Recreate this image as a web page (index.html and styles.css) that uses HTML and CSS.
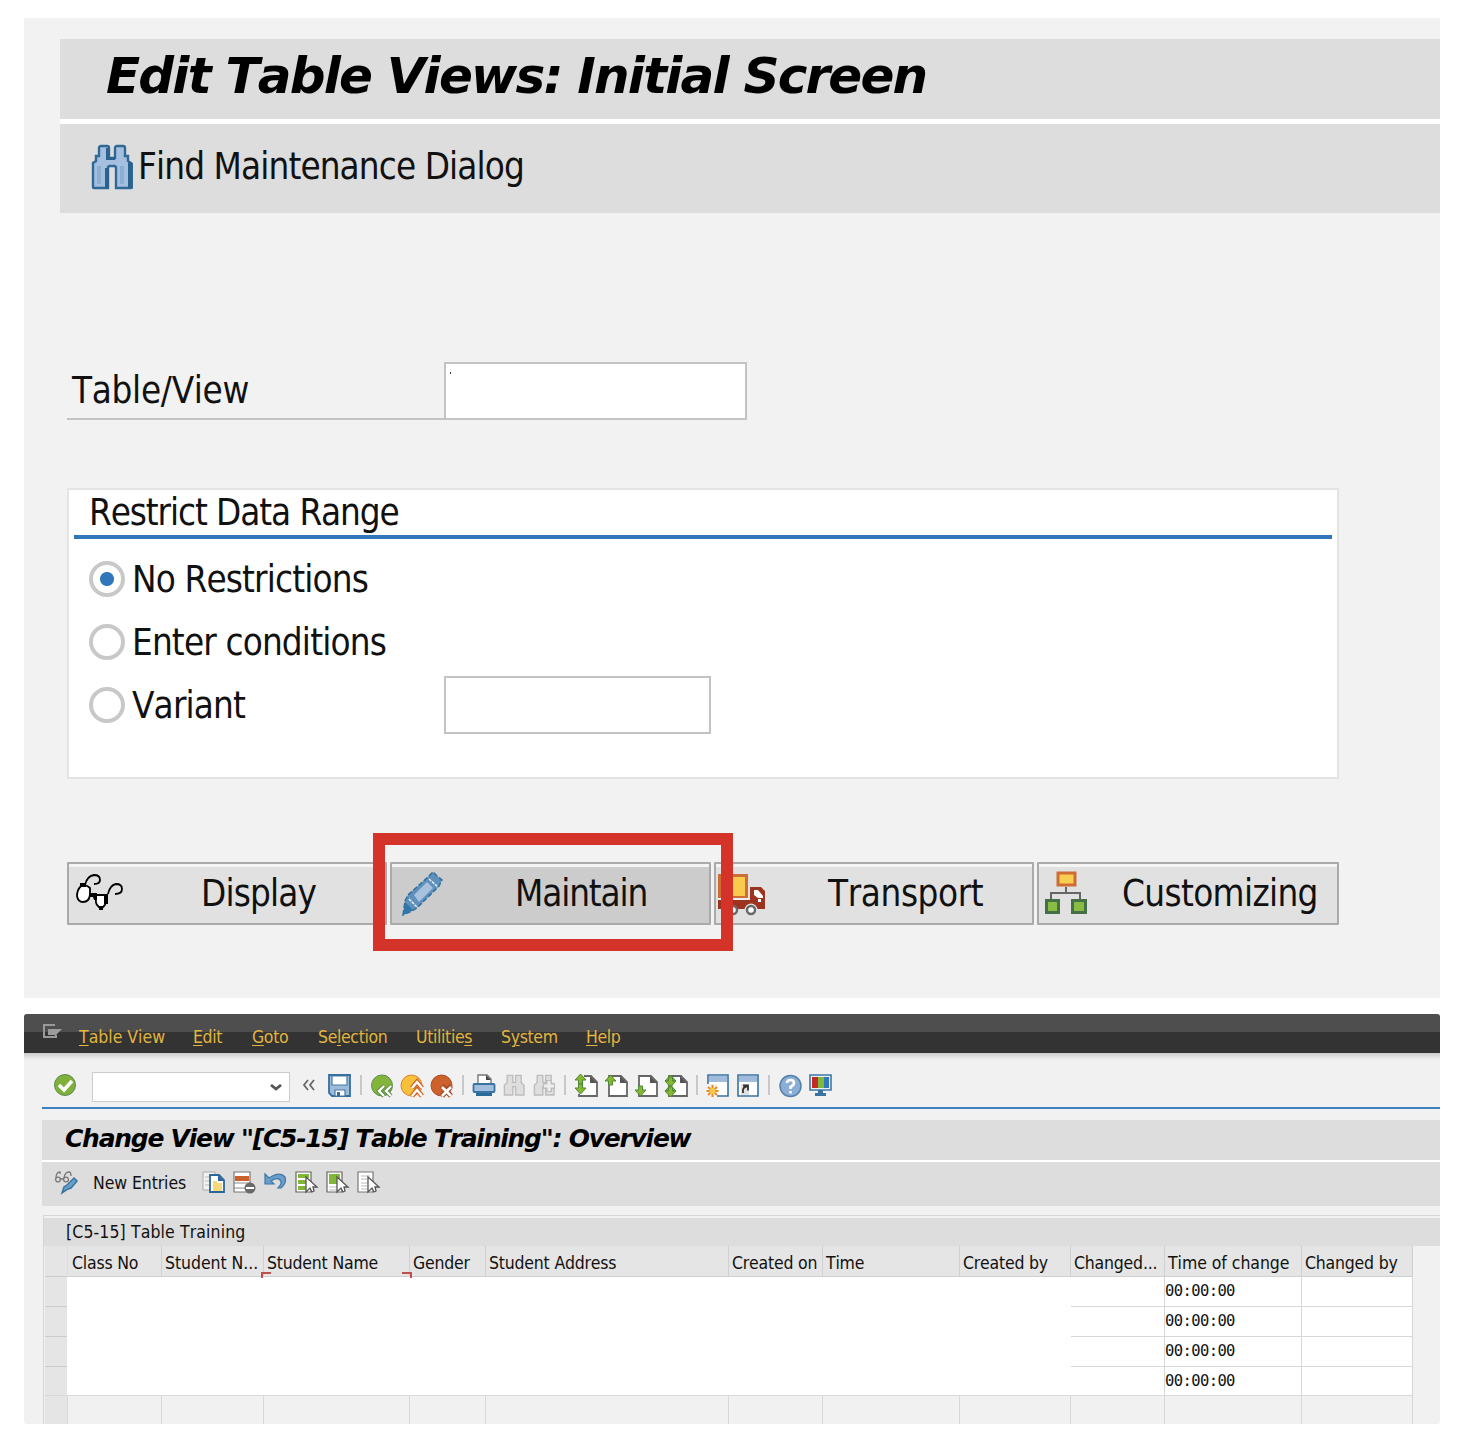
FILE: index.html
```html
<!DOCTYPE html>
<html lang="en">
<head>
<meta charset="utf-8">
<title>Table Maintenance</title>
<link rel="stylesheet" href="styles.css">
</head>
<body>
<svg class="defs" width="0" height="0">
  <defs>
    <g id="page"><path d="M7 2h10l6 6v14H5V2z" fill="#fff" stroke="#666" stroke-width="1.8"/><path d="M16 2v7h7z" fill="#555"/></g>
    <path id="up" d="M0 6 5.5 0 11 6H7.500V10H3.500V6z" fill="#86b82f" stroke="#4f8738" stroke-width="1"/>
    <path id="down" d="M0 4 5.5 10 11 4H7.500V0H3.500v4z" fill="#86b82f" stroke="#4f8738" stroke-width="1"/>
    <path id="cursor" d="M13 7v15l4-4 2 4 2-1-1-4h4z" fill="#fff" stroke="#555" stroke-width="1.3"/>
    <g id="binoc"><path d="M3 6V1h4v5h2V1h4v5l2 2v7H9V9H7v6H1V8z"/></g>
  </defs>
</svg>

<section class="initial">
  <h1 class="initial-title"><span>Edit Table Views: Initial Screen</span></h1>
  <div class="initial-tools">
    <svg width="42" height="46" viewBox="0 0 42 46"><path d="M8 12V4q0-2 2-2h6q2 0 2 2v10h6V4q0-2 2-2h6q2 0 2 2v8h3v5l4 3v23q0 1-1 1H25V24q0-2-2-2h-4q-2 0-2 2v20H3q-1 0-1-1V19l3-2v-5z" fill="#a4bfdf" stroke="#2f6a96" stroke-width="2.400"/><path d="M15 4h3v12h-3zM14 24h4v20h-4zM37 18h4v26h-4zM18 13h6v3h-6z" fill="#2a618e"/><path d="M8 22v18M31 22v18" stroke="#8fafd2" stroke-width="4"/></svg>
    <span class="big find">Find Maintenance Dialog</span>
  </div>
  <div class="field-row">
    <label class="big field-label"><span>Table/View</span></label>
    <div class="field"><i></i></div>
  </div>
  <div class="group">
    <h2 class="big"><span>Restrict Data Range</span></h2>
    <div class="option"><b class="radio on"></b><span class="big norest">No Restrictions</span></div>
    <div class="option"><b class="radio"></b><span class="big cond">Enter conditions</span></div>
    <div class="option"><b class="radio"></b><span class="big variant">Variant</span><div class="variant-field"></div></div>
  </div>
  <div class="buttons">
    <button class="btn">
      <svg class="glasses" width="48" height="42" viewBox="0 0 48 42" fill="none" stroke="#000" stroke-width="1.800"><path d="M5 13q-4 4-4 10 1 6 6 6 6 0 7-7V15q-4-4-9-2z" fill="#fff"/><path d="M20 22q-1 9 2 11l3 3 3-3q3-3 2-11z" fill="#fff"/><path d="M9 12q2-9 9-10 6 0 6 5 0 4-6 4M32 21q2-9 8-10 6 0 6 5 0 5-7 5"/><path d="M13 20h8v7h-3l-1-3h-4zM4 10h6v4H4zM28 21h4v10h-4zM23 33h4v4h-4z" fill="#000" stroke="none"/></svg>
      <span class="big display">Display</span>
    </button>
    <button class="btn active">
      <svg width="44" height="46" viewBox="0 0 44 46"><path d="M3 44 5 30 8 24 28 6l5-5 4 4 5 4-3 6-22 22-5 3z" fill="#5f90bc" stroke="#2f6f9e" stroke-width="1.500" stroke-dasharray="5 2"/><path d="M14 24 27 11l6 6-14 14z" fill="#a8c1df"/><path d="m9 28 9 9M29 8l9 8" stroke="#e8eff6" stroke-width="1.500" stroke-dasharray="3 1"/><path d="m3 44 2-13 8 8z" fill="#2f77a9"/></svg>
      <span class="big maintain">Maintain</span>
    </button>
    <button class="btn">
      <svg width="48" height="44" viewBox="0 0 48 44"><path d="M1 2h30v25H1z" fill="#cf6d36"/><path d="M4 5h24v19H4z" fill="#f9ca4c"/><path d="M1 28h32V15h11l4 4v18H1z" fill="#9c3321"/><path d="M37 18h4l5 6v2h-5l-4-3z" fill="#fff"/><path d="M41 27h3v3h-3z" fill="#fff"/><path d="M1 26h31v2H1z" fill="#eee"/><circle cx="16" cy="38" r="4" fill="#fff" stroke="#696969" stroke-width="2.500"/><circle cx="34" cy="38" r="6.500" fill="#e1e1e1"/><circle cx="34" cy="38" r="4" fill="#fff" stroke="#696969" stroke-width="2.500"/></svg>
      <span class="big transport">Transport</span>
    </button>
    <button class="btn">
      <svg width="44" height="46" viewBox="0 0 44 46"><path d="M22 16v5M7 29v-7h29v7" fill="none" stroke="#666" stroke-width="2"/><path d="M14 2h17v12H14z" fill="#f8ce50" stroke="#cf6c36" stroke-width="3"/><path d="M2.500 29.500h12v12h-12zM28.500 29.500h13v12h-13z" fill="#8abb43" stroke="#447047" stroke-width="3"/></svg>
      <span class="big custom">Customizing</span>
    </button>
    <div class="highlight"></div>
  </div>
</section>

<section class="overview">
  <nav class="menu">
    <svg width="21" height="18" viewBox="0 0 21 18"><path d="M13 2H2v12h12v-2" fill="none" stroke="#999" stroke-width="2"/><path d="M6 6h14l-6 6H6z" fill="#9b9b9b"/></svg>
    <span class="m1"><u>T</u>able View</span><span class="m2"><u>E</u>dit</span><span class="m3"><u>G</u>oto</span><span class="m4">Se<u>l</u>ection</span><span class="m5">Utilitie<u>s</u></span><span class="m6">S<u>y</u>stem</span><span class="m7"><u>H</u>elp</span>
  </nav>
  <div class="system">
    <svg class="ok" viewBox="0 0 24 24"><circle cx="11" cy="12" r="10.500" fill="#7fb13a" stroke="#5b8a4e"/><path d="m5 12 5 5 8-9" fill="none" stroke="#fff" stroke-width="3.500"/></svg>
    <div class="command"><svg width="12" height="7" viewBox="0 0 12 7"><path d="m1 1 5 4 5-4" fill="none" stroke="#555" stroke-width="2.800"/></svg></div>
    <svg class="collapse" viewBox="0 0 14 12"><path d="M6 1 2 6l4 5M12 1 8 6l4 5" fill="none" stroke="#666" stroke-width="1.800"/></svg>
    <svg viewBox="0 0 24 24"><path d="M2 1h21v21H5l-3-3z" fill="#9dbadb" stroke="#366f9d" stroke-width="1.800"/><path d="M5 2h15v9H5zM8 16h10v6H8z" fill="#fff" stroke="#4679a5" stroke-width="1.200"/><path d="M10 18h3v4h-3z" fill="#366f9d"/></svg>
    <i class="sep first"></i>
    <svg viewBox="0 0 24 24"><circle cx="12" cy="11.500" r="10.500" fill="#83b53c" stroke="#5a8c49"/><path d="m14 12-5 5 5 5m7-10-5 5 5 5" fill="none" stroke="#52823e" stroke-width="4"/><path d="m14 12-5 5 5 5m7-10-5 5 5 5" fill="none" stroke="#fff" stroke-width="2.400"/></svg>
    <svg viewBox="0 0 24 24"><circle cx="11.500" cy="11.500" r="10.500" fill="#f7c13b" stroke="#da842d"/><path d="m12 14 5-6 5 6m-10 8 5-6 5 6" fill="none" stroke="#d4682d" stroke-width="5"/><path d="m12 14 5-6 5 6m-10 8 5-6 5 6" fill="none" stroke="#fff" stroke-width="2.400"/></svg>
    <svg viewBox="0 0 24 24"><circle cx="11.500" cy="11.500" r="10.500" fill="#cc612c" stroke="#ae4a26"/><path d="m12 12 9 10m0-10-9 10" stroke="#a94421" stroke-width="5"/><path d="m12 13 9 9m0-9-9 9" stroke="#fff" stroke-width="2.800"/></svg>
    <i class="sep"></i>
    <svg viewBox="0 0 24 24"><path d="M6 11V1h9l4 4v6z" fill="#fff" stroke="#777" stroke-width="1.400"/><path d="M14 1v5h5z" fill="#444"/><rect x="1.500" y="10" width="21" height="8" rx="1" fill="#a3bfde" stroke="#3873a2" stroke-width="1.800"/><path d="M4 19h16v3H4z" fill="#2a6898"/></svg>
    <svg viewBox="0 0 24 24"><use href="#binoc" transform="matrix(1.4 0 0 1.400 1 0)" fill="#dedede" stroke="#bdbdbd"/></svg>
    <svg viewBox="0 0 24 24"><use href="#binoc" transform="matrix(1.4 0 0 1.400 1 0)" fill="#dedede" stroke="#bdbdbd"/><path d="M17 6v12M11 12h12" stroke="#bdbdbd" stroke-width="6"/><path d="M17 7v10M12 12h10" stroke="#eee" stroke-width="3"/></svg>
    <i class="sep"></i>
    <svg viewBox="0 0 24 24"><use href="#page"/><path d="M0 0h10v20H0z" fill="#f2f2f2"/><use href="#up" x="1"/><use href="#down" x="1" y="10"/></svg>
    <svg viewBox="0 0 24 24"><use href="#page"/><use href="#up" x="1" y="1"/></svg>
    <svg viewBox="0 0 24 24"><use href="#page"/><use href="#down" x="1" y="12"/></svg>
    <svg viewBox="0 0 24 24"><use href="#page"/><use href="#up" x="1" y="1"/><use href="#down" x="1" y="3"/><use href="#up" x="1" y="11"/><use href="#down" x="1" y="13"/></svg>
    <i class="sep"></i>
    <svg viewBox="0 0 24 24"><path d="M2 1h20v21H2z" fill="#fff" stroke="#3873a2" stroke-width="1.600"/><path d="M3 2h18v6H3z" fill="#a0bbdb"/><path d="M0 10h11v13H0z" fill="#f2f2f2"/><path d="M6.500 11v12M.5 17h12M2 13l9 8M11 13l-9 8" stroke="#e98b24" stroke-width="2"/><circle cx="6.500" cy="17" r="3" fill="#f7c84c"/></svg>
    <svg viewBox="0 0 24 24"><path d="M2 1h20v21H2z" fill="#fff" stroke="#3873a2" stroke-width="1.600"/><path d="M3 2h18v6H3z" fill="#a0bbdb"/><path d="M5 10h8v11H5z" fill="#e0e0e0"/><path d="M7 19v-3q0-3 5-4M7 11.500h5v5" fill="none" stroke="#333" stroke-width="1.800"/></svg>
    <i class="sep"></i>
    <svg viewBox="0 0 24 24"><circle cx="12.500" cy="12" r="10.500" fill="#8baed6" stroke="#5680a8" stroke-width="1.500"/><path d="M9 9q0-3 3.500-3T16 9q0 2-3.500 4v2m0 2v2.500" fill="none" stroke="#fff" stroke-width="2.600"/></svg>
    <svg viewBox="0 0 24 24"><path d="M2 1h21v15H2z" fill="#eaf0f5" stroke="#3d78a6" stroke-width="1.600"/><path d="M4 3h6v11H4z" fill="#c32a26"/><path d="M10 3h6v11h-6z" fill="#80b83a"/><path d="M16 3h5v11h-5z" fill="#3476bc"/><path d="M10 16h5v3h3v3H7v-3h3z" fill="#3873a2"/></svg>
  </div>
  <h1 class="view-title"><span>Change View "[C5-15] Table Training": Overview</span></h1>
  <div class="view-tools">
    <svg viewBox="0 0 24 24"><g fill="none" stroke="#777" stroke-width="1.300"><circle cx="3" cy="8.500" r="2.400"/><circle cx="11" cy="8.500" r="2.400"/><path d="M5 8h4M1 7q0-6 4-6v2M9 7q1-6 5-6 2 0 2 4"/></g><path d="m7 22 2-6 3-2 7-7 3 3-6 7-3 1z" fill="#69a0cb" stroke="#37739f" stroke-width="1.500"/></svg>
    <span class="new">New Entries</span>
    <svg viewBox="0 0 24 24"><path d="M1 1h12v18H1z" fill="#f2f2f2" stroke="#aaa"/><path d="M3 6h4M3 10h4M3 14h4" stroke="#bbb"/><path d="M8 4h9l5 5v12H8z" fill="#fff" stroke="#2a6898" stroke-width="1.800"/><path d="M16 4v6h6z" fill="#2a6898"/><path d="M11 10h4v2h5v8h-9z" fill="#f9d87b"/></svg>
    <svg viewBox="0 0 24 24"><path d="M1 1h16v20H1z" fill="#fff" stroke="#777" stroke-width="1.200"/><path d="M2 5h14v5H2z" fill="#cc612c"/><path d="M1 12h16M1 17h12" stroke="#888"/><circle cx="17" cy="17" r="5.500" fill="#696969"/><path d="M13 17h8" stroke="#fff" stroke-width="2"/></svg>
    <svg viewBox="0 0 24 24"><path d="M1 3v10h9l-3-3q6-4 9-1t-2 8h3q6-5 4-11-5-6-16 1z" fill="#6d9ecb" stroke="#3b76a5" stroke-width="1.200"/></svg>
    <svg viewBox="0 0 24 24"><path d="M1 1h15v20H1z" fill="#fff" stroke="#666" stroke-width="1.200"/><path d="M3 3h11v4H3zM3 9h9v4H3zM3 15h9v4H3z" fill="#82b63b"/><use href="#cursor" x="-2" y="-1"/></svg>
    <svg viewBox="0 0 24 24"><path d="M1 1h15v20H1z" fill="#fff" stroke="#666" stroke-width="1.200"/><path d="M3 3h11v10H3z" fill="#82b63b"/><path d="M3 16h8M3 19h8" stroke="#bbb"/><use href="#cursor" x="-2" y="-1"/></svg>
    <svg viewBox="0 0 24 24"><path d="M1 1h15v20H1z" fill="#fff" stroke="#777" stroke-width="1.200"/><path d="M4 5h9M4 8h9M4 12h7M4 15h7M4 18h7" stroke="#bbb"/><use href="#cursor" x="-2" y="-1"/></svg>
  </div>
  <div class="table">
    <div class="caption"><span>[C5-15] Table Training</span></div>
    <div class="grid">
      <div class="h sel"></div><div class="h c1">Class No</div><div class="h c2">Student N...</div><div class="h c3">Student Name</div><div class="h c4">Gender</div><div class="h c5">Student Address</div><div class="h c6">Created on</div><div class="h c7">Time</div><div class="h c8">Created by</div><div class="h c9">Changed...</div><div class="h c10">Time of change</div><div class="h c11">Changed by</div>
      <div class="sel"></div><div class="blank"></div><div class="d open"></div><div class="d">00:00:00</div><div class="d"></div>
      <div class="sel"></div><div class="d open"></div><div class="d">00:00:00</div><div class="d"></div>
      <div class="sel"></div><div class="d open"></div><div class="d">00:00:00</div><div class="d"></div>
      <div class="sel"></div><div class="d open"></div><div class="d">00:00:00</div><div class="d"></div>
      <div class="e sel"></div><div class="e"></div><div class="e"></div><div class="e"></div><div class="e"></div><div class="e"></div><div class="e"></div><div class="e"></div><div class="e"></div><div class="e"></div><div class="e"></div><div class="e"></div>
    </div>
  </div>
</section>
</body>
</html>
```
FILE: styles.css
```css
* { box-sizing: border-box; }
body {
  margin: 0;
  padding: 18px 20px 14px 24px;
  width: 1460px;
  height: 1438px;
  background: #fff;
  color: #111;
  font-family: "DejaVu Sans Condensed", "DejaVu Sans", sans-serif;
  font-stretch: condensed;
  font-kerning: none;
}
h1, h2 { margin: 0; font-weight: normal; }
svg { display: block; flex: none; }
.defs { position: absolute; }
span { white-space: nowrap; }
.big { font-size: 36.500px; line-height: 44px; letter-spacing: -.85px; }

.initial {
  height: 980px;
  padding: 21px 0 0 36px;
  background: #f2f2f2;
}
.initial-title {
  height: 80px;
  padding-left: 46px;
  background: #ddd;
  font-family: "DejaVu Sans", sans-serif;
  font-stretch: normal;
  font-size: 50px;
  line-height: 74px;
  font-weight: bold;
  font-style: italic;
  letter-spacing: -1.8px;
  color: #000;
}
.initial-tools {
  display: flex;
  height: 94px;
  padding: 20px 0 0 31px;
  gap: 5px;
  border-top: 5px solid #fff;
  background: #ddd;
}
.find { padding-top: 1px; letter-spacing: -.9px; }
.field-row {
  display: flex;
  height: 58px;
  margin: 149px 0 0 7px;
}
.field-label {
  width: 377px;
  padding: 7px 0 0 5px;
  border-bottom: 2px solid #c3c3c3;
  letter-spacing: -.3px;
}
.field {
  width: 303px;
  border: 2px solid #c3c3c3;
  background: #fff;
  padding: 8px 0 0 4px;
}
.field i { display: block; width: 1px; height: 2px; background: #333; }
.group {
  width: 1272px;
  height: 291px;
  margin: 68px 0 0 7px;
  padding: 0 5px;
  border: 2px solid #e4e4e4;
  background: #fff;
}
.group h2 {
  height: 49px;
  padding: 1px 0 0 15px;
  border-bottom: 4px solid #2f76bb;
  margin-bottom: 10px;
  letter-spacing: -1.1px;
}
.option { display: flex; height: 63px; padding: 9px 0 0 15px; }
.radio {
  width: 36px;
  height: 36px;
  margin: 3px 7px 0 0;
  border: 4px solid #c8c8c8;
  border-radius: 50%;
}
.radio.on { background: radial-gradient(circle, #2f76bb 6.500px, #fff 7.500px); }
.variant { width: 312px; }
.variant-field {
  width: 267px;
  height: 58px;
  margin-top: -8px;
  border: 2px solid #c3c3c3;
}
.buttons {
  position: relative;
  display: grid;
  grid-template-columns: 320px 321px 320px 302px;
  gap: 3px;
  height: 63px;
  margin: 83px 0 0 7px;
}
.btn {
  display: flex;
  align-items: center;
  padding: 1px 0 0 8px;
  border: 2px solid #aaa;
  border-radius: 1px;
  background: #e1e1e1;
  box-shadow: inset 0 3px #f4f4f4;
  font-family: inherit;
  font-stretch: inherit;
  font-kerning: none;
  color: #111;
}
.btn.active { background: #ccc; }
.btn:nth-child(4) { padding-left: 5px; }
.btn:nth-child(3) { padding-left: 1px; }
.glasses { margin-left: -1px; }
.display { margin-left: 77px; }
.maintain { margin-left: 71px; letter-spacing: -1.15px; }
.transport { margin-left: 63px; letter-spacing: -.4px; }
.custom { margin-left: 34px; letter-spacing: -.65px; }
.highlight {
  position: absolute;
  left: 306px;
  top: -29px;
  width: 360px;
  height: 118px;
  border: 12px solid #d43329;
}

.overview {
  height: 410px;
  margin-top: 16px;
  background: linear-gradient(#ccc 39px, #f1f1f1 46px);
  border-radius: 3px;
  overflow: hidden;
  font-size: 17.500px;
}
.menu {
  display: flex;
  height: 39px;
  padding-left: 18px;
  background: linear-gradient(#4e4e4e 18px, #333 18px);
  color: #e2b53f;
  line-height: 46px;
  letter-spacing: -.35px;
}
.menu svg { margin: 9px 16px 0 0; }
.menu u { text-underline-offset: 2px; text-decoration-thickness: 1px; }
.m1 { width: 114px; letter-spacing: 0; }
.m2 { width: 59px; }
.m3 { width: 66px; }
.m4 { width: 98px; }
.m5 { width: 85px; }
.m6 { width: 85px; }
.system {
  display: flex;
  gap: 6px;
  height: 56px;
  margin-left: 18px;
  padding: 19px 0 0 12px;
  border-bottom: 2px solid #3c80bf;
}
.system, .view-tools { align-items: flex-start; }
.system > svg { width: 24px; height: 24px; margin-top: 2px; }
.system .ok { margin-top: 1px; }
.command {
  width: 198px;
  height: 30px;
  margin-left: 8px;
  padding: 11px 7px;
  border: 1px solid #ccc;
  background: #fff;
}
.command svg { margin-left: auto; }
.system .collapse { width: 14px; height: 12px; margin: 7px 5px 0 6px; }
.sep { width: 2px; height: 20px; margin: 3px 2px 0; background: #c8c8c8; }
.sep.first { margin-left: 3px; }
.view-title {
  height: 42px;
  margin: 11px 0 0 18px;
  padding-left: 23px;
  border-bottom: 2px solid #fff;
  background: #ddd;
  color: #000;
  font-family: "DejaVu Sans", sans-serif;
  font-stretch: normal;
  font-size: 25px;
  line-height: 38px;
  font-weight: bold;
  font-style: italic;
  letter-spacing: -1.25px;
}
.view-tools {
  display: flex;
  gap: 7px;
  height: 44px;
  margin-left: 18px;
  padding: 9px 0 0 13px;
  background: #ddd;
}
.view-tools svg { width: 24px; height: 24px; }
.new { width: 102px; margin-left: 7px; line-height: 24px; letter-spacing: -.1px; }
.table {
  height: 209px;
  margin: 9px 0 0 19px;
  padding-top: 2px;
  border: 1px solid #d5d5d5;
  border-width: 1px 0 0 1px;
}
.caption {
  height: 28px;
  padding-left: 22px;
  background: #ddd;
  line-height: 28px;
  letter-spacing: .12px;
}
.grid {
  display: grid;
  margin-left: 1px;
  grid-template-columns: 23px 94px 102px 146px 76px 243px 94px 137px 111px 94px 137px 111px;
  grid-template-rows: 31px 30px 30px 30px 29px 30px;
}
.h {
  position: relative;
  padding-left: 3px;
  background: #e5e5e5;
  border-right: 1px solid #d0d0d0;
  border-bottom: 1px solid #d0d0d0;
  line-height: 34px;
  letter-spacing: -.2px;
  white-space: nowrap;
}
.c1 { padding-left: 4px; }
.c2, .c10 { letter-spacing: -.05px; }
.c3 { z-index: 2; }
.c3::before, .c3::after {
  content: "";
  position: absolute;
  bottom: -2px;
  width: 8px;
  height: 4px;
  border: 2px solid #c0504d;
  border-bottom: 0;
}
.c3::before { left: -3px; border-right: 0; }
.c3::after { right: -3px; border-left: 0; }
.sel { grid-column: 1; background: #e5e5e5; border-bottom: 1px solid #ccc; border-right: 1px solid #ddd; }
.blank { z-index: 1; grid-column: 2 / 10; grid-row: 2 / 6; margin: 0 0 1px -1px; background: #fff; }
.d {
  background: #fff;
  border-right: 1px solid #d8d8d8;
  border-bottom: 1px solid #d8d8d8;
  font: 15.500px/29px "DejaVu Sans Mono", monospace;
  letter-spacing: -.6px;
}
.e { border-right: 1px solid #d8d8d8; border-top: 1px solid #d8d8d8; margin-top: -1px; }
```
